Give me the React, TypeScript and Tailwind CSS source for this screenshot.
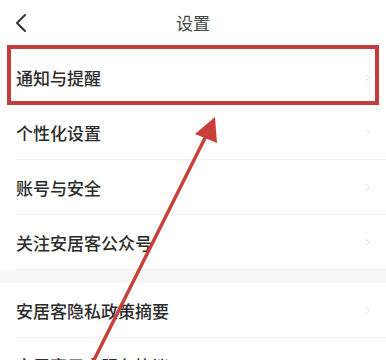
import { ChevronRight } from "lucide-react";

const groupOne = ["通知与提醒", "个性化设置", "账号与安全", "关注安居客公众号"];
const groupTwo = ["安居客隐私政策摘要", "安居客用户服务协议"];

function Row({ label, last }: { label: string; last?: boolean }) {
  return (
    <div className="h-[55px] pl-4 flex items-center">
      <div
        className={`flex flex-1 h-full items-center pr-3 ${
          last ? "" : "border-b border-[#efefef]"
        }`}
      >
        <span className="flex-1 text-[17px] font-medium text-[#2b2b2b] leading-none">{label}</span>
        <ChevronRight className="w-[13px] h-[13px] text-[#d9d9d9]" strokeWidth={1.5} />
      </div>
    </div>
  );
}

export default function App() {
  return (
    <div
      className="relative w-[386px] h-[360px] overflow-hidden bg-white"
      style={{ fontFamily: '"Noto Sans CJK SC", "Noto Sans", sans-serif' }}
    >
      {/* header */}
      <header className="relative h-[50px] flex items-center justify-center">
        <svg
          className="absolute left-[14px] top-[12px] w-[14px] h-[22px] text-[#333]"
          viewBox="0 0 14 22"
          fill="none"
          stroke="currentColor"
          strokeWidth={2}
          strokeLinecap="round"
          strokeLinejoin="round"
        >
          <path d="M11 3 L3 11 L11 19" />
        </svg>
        <span className="text-[17px] text-[#444] -mt-[4px]">设置</span>
      </header>

      <div>
        {groupOne.map((label, i) => (
          <Row key={label} label={label} last={i === 0} />
        ))}
      </div>
      <div className="h-[13px] bg-[#f7f7f7]" />
      <div>
        {groupTwo.map((label) => (
          <Row key={label} label={label} />
        ))}
      </div>

      {/* annotation: highlight box + arrow */}
      <div className="absolute left-[7px] top-[45px] w-[372px] h-[60px] border-4 border-[#c33d3b]" />
      <svg className="absolute inset-0 w-[386px] h-[360px]" viewBox="0 0 386 360">
        <line x1="93" y1="362" x2="211" y2="126" stroke="#c9403a" strokeWidth={3.5} />
        <polygon points="215,117 195,134 217,143" fill="#c9403a" />
      </svg>
    </div>
  );
}
